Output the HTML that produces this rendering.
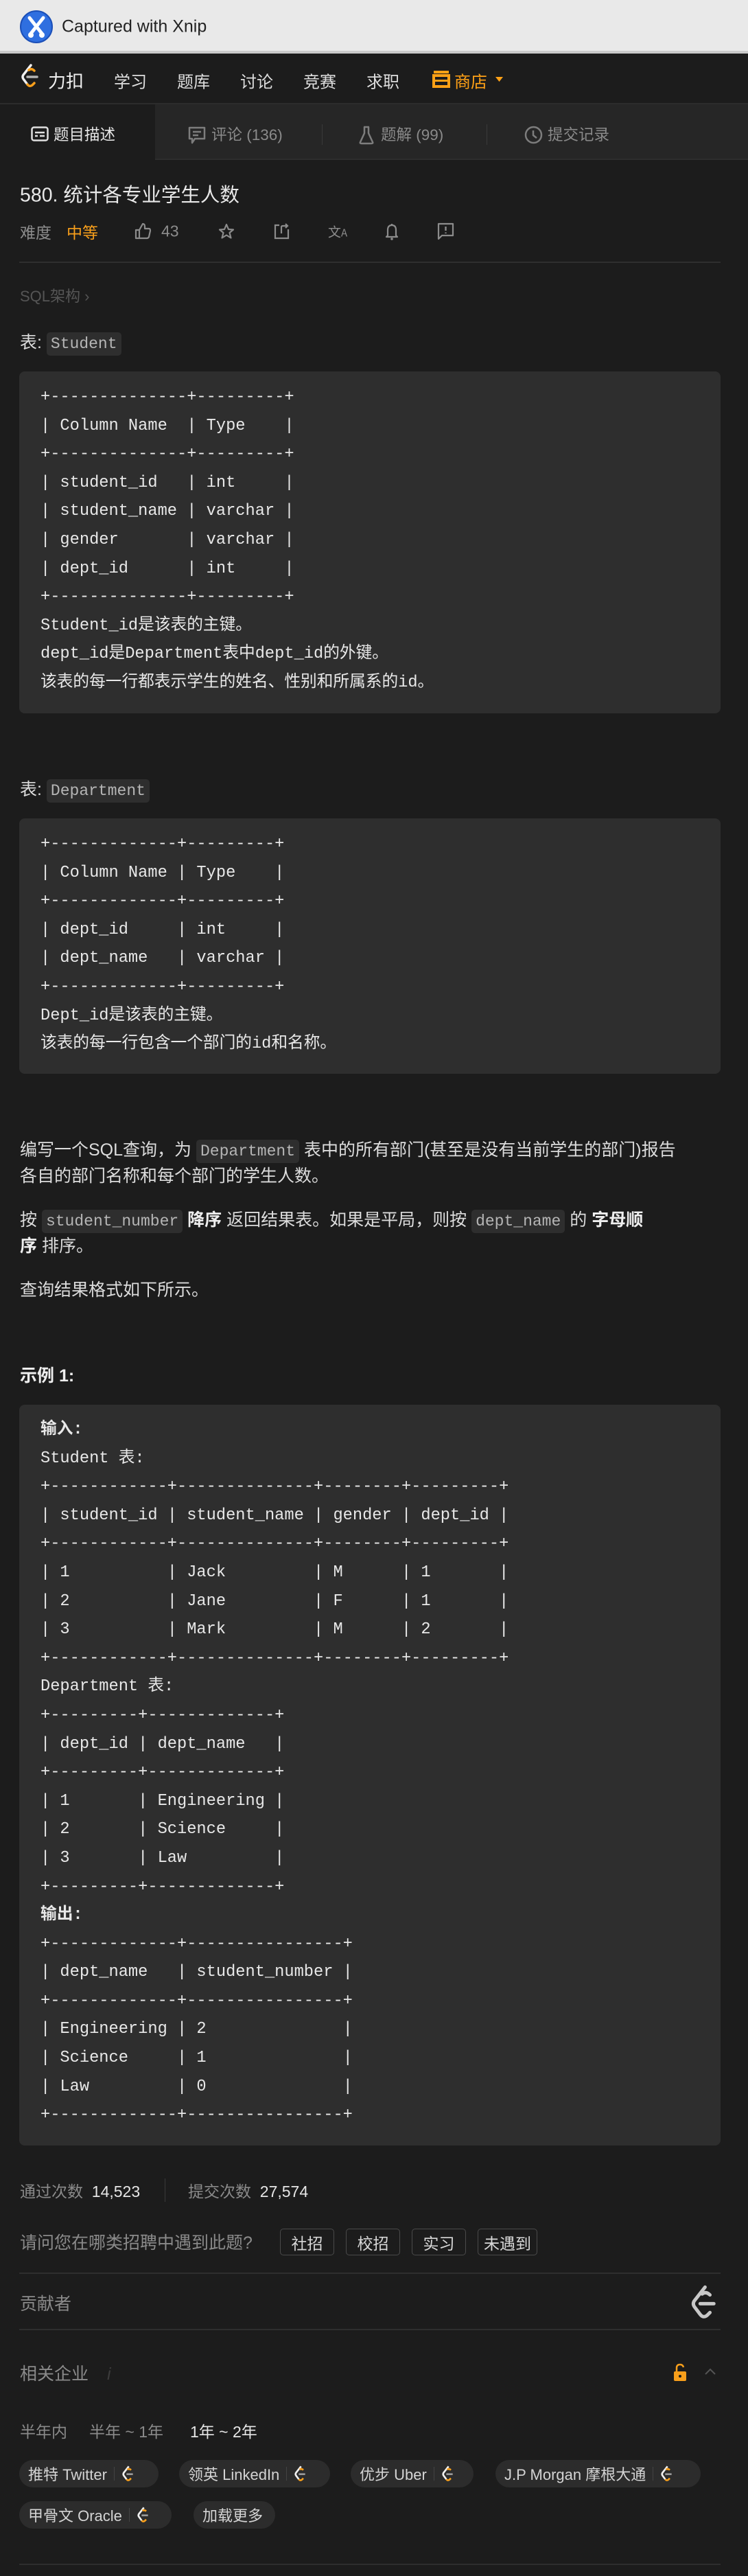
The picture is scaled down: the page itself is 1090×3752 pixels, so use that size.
<!DOCTYPE html>
<html><head><meta charset="utf-8">
<style>
*{margin:0;padding:0;box-sizing:border-box}
body{width:1090px;height:3752px;background:#1c1c1c;position:relative;overflow:hidden;font-family:"Liberation Sans","Noto Sans CJK SC",sans-serif;color:#dcdcdc}
.a{position:absolute;white-space:nowrap}
.mid{transform:translateY(-50%)}
.xnip{position:absolute;left:0;top:0;width:1090px;height:78px;background:#e9e9e9;border-bottom:4px solid #c9c9c9}
.nav{position:absolute;left:0;top:82px;width:1090px;height:70px;background:#1c1c1c;border-bottom:2px solid #2c2c2c}
.nav .a{font-size:24px;color:#dedede;top:35px}
.tabs{position:absolute;left:0;top:152px;width:1090px;height:81px;background:#262626;border-bottom:2px solid #2e2e2e}
.tab{position:absolute;font-size:22.5px;color:#8a8a8a;top:43px;transform:translateY(-50%);white-space:nowrap}
.code{position:absolute;left:28px;width:1022px;background:#2e2e2e;border-radius:8px;font-family:"Liberation Mono","Noto Sans CJK SC",monospace;font-size:23.7px;line-height:41.6px;color:#e8e8e8;white-space:pre;padding-left:31px}
.ic{background:#2e2e2e;border-radius:5px;font-family:"Liberation Mono",monospace;color:#b5b5b5;padding:4px 6px;font-size:23px}
.p{font-size:25px;color:#dcdcdc}
.btn{position:absolute;top:3246px;height:39px;border:1.5px solid #4a4a4a;border-radius:5px;font-size:23px;color:#d8d8d8;display:flex;align-items:center;justify-content:center}
.chip{position:absolute;height:40px;background:#2c2c2c;border-radius:20px;font-size:22px;color:#d4d4d4;display:flex;align-items:center;padding-left:13px;white-space:nowrap}
.chip .sep{width:1px;height:20px;background:#444;margin:0 10px}
.hr{position:absolute;left:28px;width:1022px;height:2px;background:#2e2e2e}
.g{color:#8a8a8a}
</style></head><body>

<div class="xnip">
  <svg class="a" style="left:28px;top:14px" width="50" height="50" viewBox="0 0 50 50"><circle cx="25" cy="25" r="23" fill="#2f6fe0"/><circle cx="25" cy="25" r="23" fill="none" stroke="#1b4fb8" stroke-width="2"/><path d="M15 12 L34 36 M35 12 L16 36" stroke="#fff" stroke-width="5" stroke-linecap="round"/><circle cx="17" cy="37" r="4" fill="#fff"/><circle cx="33" cy="37" r="4" fill="#fff"/></svg>
  <div class="a" style="left:90px;top:39px;transform:translateY(-50%);font-size:25px;color:#222">Captured with Xnip</div>
</div>

<div class="nav">
  <svg class="a" style="left:29px;top:10px" width="30" height="38" viewBox="0 0 30 38"><path d="M16 3 L5 17 Q3 20 5 23 L11 31" stroke="#f0f0f0" stroke-width="3.5" fill="none" stroke-linecap="round"/><path d="M11 31 Q14 35 18 32 L21 29" stroke="#f89f1b" stroke-width="3.5" fill="none" stroke-linecap="round"/><path d="M13 10 Q17 7 21 11" stroke="#f89f1b" stroke-width="3.5" fill="none" stroke-linecap="round"/><path d="M11 20 H25" stroke="#b3b3b3" stroke-width="3.5" stroke-linecap="round"/></svg>
  <div class="a mid" style="left:70px;font-size:26px;color:#f0f0f0">力扣</div>
  <div class="a mid" style="left:166px">学习</div>
  <div class="a mid" style="left:258px">题库</div>
  <div class="a mid" style="left:350px">讨论</div>
  <div class="a mid" style="left:442px">竞赛</div>
  <div class="a mid" style="left:534px">求职</div>
  <svg class="a" style="left:630px;top:19px" width="26" height="27" viewBox="0 0 26 27"><rect x="2" y="2" width="22" height="4" fill="#ffa116"/><rect x="2" y="9" width="22" height="16" fill="none" stroke="#ffa116" stroke-width="4"/><rect x="2" y="15" width="22" height="3" fill="#ffa116"/></svg>
  <div class="a mid" style="left:662px;color:#ffa116">商店</div>
  <svg class="a" style="left:722px;top:30px" width="11" height="8"><path d="M0 0 H11 L5.5 7Z" fill="#ffa116"/></svg>
</div>

<div class="tabs">
  <div style="position:absolute;left:0;top:0;width:226px;height:83px;background:#1c1c1c"></div>
  <svg class="a" style="left:45px;top:32px" width="26" height="22" viewBox="0 0 26 22"><rect x="1.5" y="1.5" width="23" height="19" rx="3" fill="none" stroke="#e0e0e0" stroke-width="2.5"/><path d="M6 9H20M6 14H10M13 14H20" stroke="#e0e0e0" stroke-width="2.5"/></svg>
  <div class="tab" style="left:78px;color:#e6e6e6">题目描述</div>
  <svg class="a" style="left:273px;top:31px" width="28" height="28" viewBox="0 0 28 28"><path d="M3 3H25V19H11L7 25V19H3Z" fill="none" stroke="#7d7d7d" stroke-width="2.5" stroke-linejoin="round"/><path d="M8 9H20M8 14H16" stroke="#7d7d7d" stroke-width="2.5"/></svg>
  <div class="tab" style="left:308px">评论 (136)</div>
  <div class="a" style="left:469px;top:29px;width:1px;height:30px;background:#3a3a3a"></div>
  <svg class="a" style="left:522px;top:31px" width="24" height="28" viewBox="0 0 24 28"><path d="M8 2H16M9 2V11L3 24Q2 26 5 26H19Q22 26 21 24L15 11V2" fill="none" stroke="#7d7d7d" stroke-width="2.5" stroke-linejoin="round"/></svg>
  <div class="tab" style="left:555px">题解 (99)</div>
  <div class="a" style="left:709px;top:29px;width:1px;height:30px;background:#3a3a3a"></div>
  <svg class="a" style="left:764px;top:31px" width="27" height="27" viewBox="0 0 27 27"><circle cx="13.5" cy="13.5" r="11.5" fill="none" stroke="#7d7d7d" stroke-width="2.5"/><path d="M13 7V14L18 18" fill="none" stroke="#7d7d7d" stroke-width="2.5"/></svg>
  <div class="tab" style="left:798px">提交记录</div>
</div>

<div class="a mid" style="left:29px;top:282px;font-size:28.5px;color:#e8e8e8">580. 统计各专业学生人数</div>
<div class="a mid" style="left:29px;top:337px;font-size:23px;color:#8c8c8c">难度</div>
<div class="a mid" style="left:97px;top:337px;font-size:23px;color:#f89f1b">中等</div>
<svg class="a" style="left:196px;top:324px" width="25" height="25" viewBox="0 0 25 25"><path d="M2 11H7V23H2ZM7 11L12 2Q15 2 15 6V9H21Q23 9 23 12L21 21Q20 23 18 23H7" fill="none" stroke="#8c8c8c" stroke-width="2.2" stroke-linejoin="round"/></svg>
<div class="a mid" style="left:235px;top:337px;font-size:23px;color:#8c8c8c">43</div>
<svg class="a" style="left:318px;top:325px" width="24" height="24" viewBox="0 0 24 24"><path d="M12 2L15 9L22 9.5L16.5 14L18.5 21.5L12 17.5L5.5 21.5L7.5 14L2 9.5L9 9Z" fill="none" stroke="#8c8c8c" stroke-width="2.2" stroke-linejoin="round"/></svg>
<svg class="a" style="left:398px;top:325px" width="24" height="24" viewBox="0 0 24 24"><path d="M9 3H3V22H22V9M12 15V6Q12 4 14 4H21M18 1L21 4L18 7" fill="none" stroke="#8c8c8c" stroke-width="2.2"/></svg>
<div class="a mid" style="left:478px;top:337px;font-size:19px;color:#8c8c8c;font-family:'Noto Sans CJK SC',sans-serif">文<span style="font-size:15px">A</span></div>
<svg class="a" style="left:561px;top:324px" width="20" height="26" viewBox="0 0 20 26"><path d="M10 2V4M4 19V11Q4 4 10 4Q16 4 16 11V19L18 21H2Z" fill="none" stroke="#8c8c8c" stroke-width="2.2" stroke-linejoin="round"/><circle cx="10" cy="24" r="1.8" fill="#8c8c8c"/></svg>
<svg class="a" style="left:637px;top:324px" width="25" height="26" viewBox="0 0 25 26"><path d="M2 2H23V19H7L2 24Z" fill="none" stroke="#8c8c8c" stroke-width="2.2" stroke-linejoin="round"/><path d="M12.5 6V12M12.5 14.5V16" stroke="#8c8c8c" stroke-width="2.4"/></svg>

<div class="hr" style="top:381px"></div>

<div class="a mid" style="left:29px;top:430px;font-size:22px;color:#555">SQL架构 ›</div>
<div class="a mid p" style="left:29px;top:497px">表: <span class="ic">Student</span></div>

<div class="code" style="top:541px;height:498px;padding-top:17px">+--------------+---------+
| Column Name  | Type    |
+--------------+---------+
| student_id   | int     |
| student_name | varchar |
| gender       | varchar |
| dept_id      | int     |
+--------------+---------+
Student_id是该表的主键。
dept_id是Department表中dept_id的外键。
该表的每一行都表示学生的姓名、性别和所属系的id。</div>

<div class="a mid p" style="left:29px;top:1148px">表: <span class="ic">Department</span></div>

<div class="code" style="top:1192px;height:372px;padding-top:17px">+-------------+---------+
| Column Name | Type    |
+-------------+---------+
| dept_id     | int     |
| dept_name   | varchar |
+-------------+---------+
Dept_id是该表的主键。
该表的每一行包含一个部门的id和名称。</div>

<div class="a mid p" style="left:29px;top:1673px">编写一个SQL查询，为 <span class="ic">Department</span> 表中的所有部门(甚至是没有当前学生的部门)报告</div>
<div class="a mid p" style="left:29px;top:1711px">各自的部门名称和每个部门的学生人数。</div>
<div class="a mid p" style="left:29px;top:1775px">按 <span class="ic">student_number</span> <b style="color:#eee">降序</b> 返回结果表。如果是平局，则按 <span class="ic">dept_name</span> 的 <b style="color:#eee">字母顺</b></div>
<div class="a mid p" style="left:29px;top:1813px"><b style="color:#eee">序</b> 排序。</div>
<div class="a mid p" style="left:29px;top:1877px">查询结果格式如下所示。</div>
<div class="a mid p" style="left:29px;top:2002px;font-weight:bold;color:#eee">示例 1:</div>

<div class="code" style="top:2046px;height:1079px;padding-top:16px"><b>输入:</b>
Student 表:
+------------+--------------+--------+---------+
| student_id | student_name | gender | dept_id |
+------------+--------------+--------+---------+
| 1          | Jack         | M      | 1       |
| 2          | Jane         | F      | 1       |
| 3          | Mark         | M      | 2       |
+------------+--------------+--------+---------+
Department 表:
+---------+-------------+
| dept_id | dept_name   |
+---------+-------------+
| 1       | Engineering |
| 2       | Science     |
| 3       | Law         |
+---------+-------------+
<b>输出:</b>
+-------------+----------------+
| dept_name   | student_number |
+-------------+----------------+
| Engineering | 2              |
| Science     | 1              |
| Law         | 0              |
+-------------+----------------+</div>

<div class="a mid" style="left:29px;top:3190px;font-size:23px"><span class="g">通过次数</span>&nbsp;&nbsp;<span style="color:#e6e6e6">14,523</span></div>
<div class="a" style="left:240px;top:3173px;width:1px;height:34px;background:#3a3a3a"></div>
<div class="a mid" style="left:274px;top:3190px;font-size:23px"><span class="g">提交次数</span>&nbsp;&nbsp;<span style="color:#e6e6e6">27,574</span></div>

<div class="a mid" style="left:29px;top:3265px;font-size:25px;color:#8a8a8a">请问您在哪类招聘中遇到此题?</div>
<div class="btn" style="left:408px;width:79px">社招</div>
<div class="btn" style="left:504px;width:79px">校招</div>
<div class="btn" style="left:600px;width:79px">实习</div>
<div class="btn" style="left:696px;width:87px">未遇到</div>
<div class="hr" style="top:3310px"></div>

<div class="a mid" style="left:29px;top:3354px;font-size:25px;color:#8a8a8a">贡献者</div>
<svg class="a" style="left:1003px;top:3327px" width="46" height="54" viewBox="0 0 30 38"><path d="M16 3 L5 17 Q3 20 5 23 L11 31 Q14 35 18 32 L21 29" stroke="#c8c8c8" stroke-width="3.5" fill="none" stroke-linecap="round"/><path d="M13 10 Q17 7 21 11" stroke="#c8c8c8" stroke-width="3.5" fill="none" stroke-linecap="round"/><path d="M11 20 H25" stroke="#c8c8c8" stroke-width="3.5" stroke-linecap="round"/></svg>
<div class="hr" style="top:3392px"></div>

<div class="a mid" style="left:29px;top:3456px;font-size:25px;color:#8a8a8a">相关企业 <span style="color:#3c3c3c;font-style:italic;margin-left:20px">i</span></div>
<svg class="a" style="left:980px;top:3442px" width="22" height="28" viewBox="0 0 22 28"><path d="M6 12V7Q6 2 11 2Q15 2 16 6" fill="none" stroke="#f89f1b" stroke-width="2.5"/><rect x="2" y="12" width="18" height="14" rx="2" fill="#f89f1b"/><circle cx="11" cy="19" r="2" fill="#1c1c1c"/></svg>
<svg class="a" style="left:1026px;top:3448px" width="18" height="12"><path d="M2 10L9 3L16 10" fill="none" stroke="#555" stroke-width="2"/></svg>

<div class="a mid" style="left:29px;top:3540px;font-size:23px;color:#8a8a8a">半年内</div>
<div class="a mid" style="left:130px;top:3540px;font-size:23px;color:#8a8a8a">半年 ~ 1年</div>
<div class="a mid" style="left:277px;top:3540px;font-size:23px;color:#e6e6e6">1年 ~ 2年</div>

<div class="chip" style="left:28px;top:3583px;width:203px">推特 Twitter<span class="sep"></span><svg width="20" height="26" viewBox="0 0 30 38"><path d="M16 3 L5 17 Q3 20 5 23 L11 31" stroke="#f0f0f0" stroke-width="4" fill="none"/><path d="M11 31 Q14 35 18 32 L21 29" stroke="#f89f1b" stroke-width="4" fill="none"/><path d="M13 10 Q17 7 21 11" stroke="#f89f1b" stroke-width="4" fill="none"/><path d="M11 20 H25" stroke="#999" stroke-width="4"/></svg></div>
<div class="chip" style="left:261px;top:3583px;width:220px">领英 LinkedIn<span class="sep"></span><svg width="20" height="26" viewBox="0 0 30 38"><path d="M16 3 L5 17 Q3 20 5 23 L11 31" stroke="#f0f0f0" stroke-width="4" fill="none"/><path d="M11 31 Q14 35 18 32 L21 29" stroke="#f89f1b" stroke-width="4" fill="none"/><path d="M13 10 Q17 7 21 11" stroke="#f89f1b" stroke-width="4" fill="none"/><path d="M11 20 H25" stroke="#999" stroke-width="4"/></svg></div>
<div class="chip" style="left:511px;top:3583px;width:179px">优步 Uber<span class="sep"></span><svg width="20" height="26" viewBox="0 0 30 38"><path d="M16 3 L5 17 Q3 20 5 23 L11 31" stroke="#f0f0f0" stroke-width="4" fill="none"/><path d="M11 31 Q14 35 18 32 L21 29" stroke="#f89f1b" stroke-width="4" fill="none"/><path d="M13 10 Q17 7 21 11" stroke="#f89f1b" stroke-width="4" fill="none"/><path d="M11 20 H25" stroke="#999" stroke-width="4"/></svg></div>
<div class="chip" style="left:722px;top:3583px;width:299px">J.P Morgan 摩根大通<span class="sep"></span><svg width="20" height="26" viewBox="0 0 30 38"><path d="M16 3 L5 17 Q3 20 5 23 L11 31" stroke="#f0f0f0" stroke-width="4" fill="none"/><path d="M11 31 Q14 35 18 32 L21 29" stroke="#f89f1b" stroke-width="4" fill="none"/><path d="M13 10 Q17 7 21 11" stroke="#f89f1b" stroke-width="4" fill="none"/><path d="M11 20 H25" stroke="#999" stroke-width="4"/></svg></div>
<div class="chip" style="left:28px;top:3643px;width:222px">甲骨文 Oracle<span class="sep"></span><svg width="20" height="26" viewBox="0 0 30 38"><path d="M16 3 L5 17 Q3 20 5 23 L11 31" stroke="#f0f0f0" stroke-width="4" fill="none"/><path d="M11 31 Q14 35 18 32 L21 29" stroke="#f89f1b" stroke-width="4" fill="none"/><path d="M13 10 Q17 7 21 11" stroke="#f89f1b" stroke-width="4" fill="none"/><path d="M11 20 H25" stroke="#999" stroke-width="4"/></svg></div>
<div class="chip" style="left:282px;top:3643px;width:119px">加载更多</div>

<div class="hr" style="top:3734px"></div>
</body></html>
